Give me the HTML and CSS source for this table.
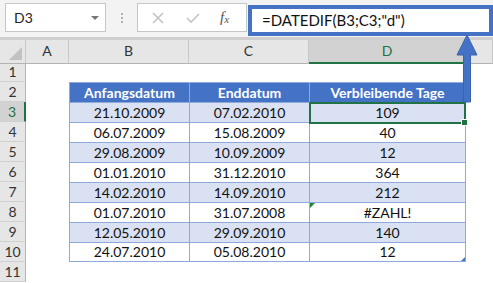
FILE: index.html
```html
<!DOCTYPE html>
<html lang="de">
<head>
  <meta charset="UTF-8" />
  <title>DATEDIF</title>
  <link rel="stylesheet" href="styles.css">
</head>
<body>
  <div class="window">
    <!-- formula bar -->
    <div class="formula-bar">
      <div class="name-box"><span>D3</span><span class="caret"></span></div>
      <div class="grip"><i></i><i></i><i></i></div>
      <div class="fx-buttons">
        <svg class="btn" width="12" height="12" viewBox="0 0 12 12"><path d="M1 1 L11 11 M11 1 L1 11" /></svg>
        <svg class="btn" width="14" height="12" viewBox="0 0 14 12"><path d="M1 6 L5 10 L13 2" /></svg>
        <span class="fx">f<sub>x</sub></span>
      </div>
      <div class="formula">=DATEDIF(B3;C3;"d")</div>
    </div>

    <!-- sheet -->
    <div class="sheet">
      <div class="row heads">
        <div class="corner"><span></span></div>
        <div class="ch">A</div>
        <div class="ch">B</div>
        <div class="ch">C</div>
        <div class="ch sel">D</div>
        <div class="ch"></div>
      </div>
      <div class="row">
        <div class="rh">1</div><div></div><div></div><div></div><div></div><div></div>
      </div>
      <div class="row">
        <div class="rh">2</div><div></div>
        <div class="t th">Anfangsdatum</div><div class="t th">Enddatum</div><div class="t th last">Verbleibende Tage</div><div></div>
      </div>
      <div class="row band">
        <div class="rh sel">3</div><div></div>
        <div class="t">21.10.2009</div><div class="t">07.02.2010</div><div class="t last active">109</div><div></div>
      </div>
      <div class="row">
        <div class="rh">4</div><div></div>
        <div class="t">06.07.2009</div><div class="t">15.08.2009</div><div class="t last">40</div><div></div>
      </div>
      <div class="row band">
        <div class="rh">5</div><div></div>
        <div class="t">29.08.2009</div><div class="t">10.09.2009</div><div class="t last">12</div><div></div>
      </div>
      <div class="row">
        <div class="rh">6</div><div></div>
        <div class="t">01.01.2010</div><div class="t">31.12.2010</div><div class="t last">364</div><div></div>
      </div>
      <div class="row band">
        <div class="rh">7</div><div></div>
        <div class="t">14.02.2010</div><div class="t">14.09.2010</div><div class="t last">212</div><div></div>
      </div>
      <div class="row">
        <div class="rh">8</div><div></div>
        <div class="t">01.07.2010</div><div class="t">31.07.2008</div><div class="t last error">#ZAHL!</div><div></div>
      </div>
      <div class="row band">
        <div class="rh">9</div><div></div>
        <div class="t">12.05.2010</div><div class="t">29.09.2010</div><div class="t last">140</div><div></div>
      </div>
      <div class="row end">
        <div class="rh">10</div><div></div>
        <div class="t">24.07.2010</div><div class="t">05.08.2010</div><div class="t last resize">12</div><div></div>
      </div>
      <div class="row">
        <div class="rh">11</div><div></div><div></div><div></div><div></div><div></div>
      </div>
    </div>

    <!-- arrow pointing at the formula -->
    <svg class="pointer" width="24" height="72" viewBox="0 0 24 72">
      <polygon points="12,2 22,22 15.5,22 15.5,69 8.5,69 8.5,22 2,22" />
    </svg>
  </div>
</body>
</html>
```

FILE: styles.css
```css
:root {
  --blue: #4472c4;
  --band: #d9e1f2;
  --line: #8ea9db;
  --green: #217346;
  --head: #e6e6e6;
  --head-sel: #d2d2d2;
}

body {
  margin: 0;
  background: #fff;
  font-family: Lato, 'Open Sans', sans-serif;
  color: #222;
}

.window {
  position: relative;
  width: 493px;
  height: 283px;
  overflow: hidden;
}

/* ---------- formula bar ---------- */

.formula-bar {
  display: flex;
  align-items: flex-start;
  height: 37px;
  padding-left: 5px;
  background: #f3f3f3;
  border-bottom: 3px solid #cfcfcf;
}

.name-box {
  display: flex;
  align-items: center;
  justify-content: space-between;
  box-sizing: border-box;
  width: 101px;
  height: 29px;
  margin-top: 3px;
  padding: 0 6px 0 8px;
  background: #fff;
  border: 1px solid #c6c6c6;
  font-size: 14px;
}

.caret {
  width: 0;
  height: 0;
  border-left: 4px solid transparent;
  border-right: 4px solid transparent;
  border-top: 4px solid #777;
}

.grip {
  display: flex;
  flex-direction: column;
  align-items: center;
  gap: 2px;
  width: 31px;
  margin-top: 13px;
}

.grip i {
  width: 2px;
  height: 2px;
  background: #b0b0b0;
}

.fx-buttons {
  display: flex;
  align-items: center;
  box-sizing: border-box;
  width: 110px;
  height: 29px;
  margin-top: 3px;
  padding-left: 14px;
  gap: 22px;
  background: #fff;
  border: 1px solid #c6c6c6;
}

.btn path {
  fill: none;
  stroke: #c4c4c4;
  stroke-width: 1.6;
}

.fx {
  font-family: 'Liberation Serif', serif;
  font-style: italic;
  font-size: 15px;
  color: #555;
  margin-left: -2px;
}

.fx sub {
  font-size: 11px;
  vertical-align: -1px;
}

.formula {
  box-sizing: border-box;
  width: 245px;
  height: 31px;
  margin: 5px 0 0 1px;
  padding: 2px 0 0 10px;
  background: #fff;
  border: 4px solid var(--blue);
  font-size: 15px;
  line-height: 19px;
  color: #111;
  white-space: nowrap;
}

/* ---------- grid ---------- */

.row {
  display: grid;
  grid-template-columns: 26px 43px 120px 120px 157px 1fr;
  height: 20px;
  font-size: 14px;
}

.row > div {
  box-sizing: border-box;
  text-align: center;
  line-height: 19px;
}

.row.heads {
  height: 22px;
}

.row.heads > div {
  background: var(--head);
  border-right: 1px solid #c8c8c8;
  border-bottom: 1px solid #b4b4b4;
  line-height: 22px;
  color: #333;
}

.corner {
  position: relative;
}

.corner span {
  position: absolute;
  right: 3px;
  bottom: 3px;
  width: 0;
  height: 0;
  border-left: 13px solid transparent;
  border-bottom: 13px solid #c2c2c2;
}

.row.heads > .ch.sel {
  background: var(--head-sel);
  color: var(--green);
  border-bottom: 2px solid var(--green);
}

.row > .rh {
  background: var(--head);
  border-right: 1px solid #b4b4b4;
  border-bottom: 1px solid #d0d0d0;
  color: #333;
}

.row > .rh.sel {
  background: var(--head-sel);
  color: var(--green);
  border-right: 2px solid var(--green);
}

/* ---------- table ---------- */

.row > .t {
  border-left: 1px solid var(--line);
  border-top: 1px solid var(--line);
  color: #111;
}

.row > .t.last {
  border-right: 1px solid var(--line);
}

.row.band > .t {
  background: var(--band);
}

.row.end > .t {
  border-bottom: 1px solid var(--line);
  line-height: 18px;
}

.row > .th {
  background: var(--blue);
  color: #fff;
  font-weight: bold;
}

.active {
  position: relative;
}

.active::after {
  content: '';
  position: absolute;
  left: -1px;
  top: -1px;
  right: -1px;
  bottom: -2px;
  border: 2px solid var(--green);
}

.active::before {
  content: '';
  position: absolute;
  right: -3px;
  bottom: -4px;
  width: 5px;
  height: 5px;
  background: var(--green);
  border: 1px solid #fff;
  z-index: 1;
}

.error {
  position: relative;
}

.error::before {
  content: '';
  position: absolute;
  left: 0;
  top: 0;
  border-top: 5px solid #1b8a2e;
  border-right: 5px solid transparent;
}

.resize {
  position: relative;
}

.resize::after {
  content: '';
  position: absolute;
  right: 0;
  bottom: 0;
  border-bottom: 4px solid var(--blue);
  border-left: 4px solid transparent;
}

/* ---------- callout arrow ---------- */

.pointer {
  position: absolute;
  left: 455px;
  top: 33px;
}

.pointer polygon {
  fill: var(--blue);
  stroke: #3a62ad;
  stroke-width: 1;
}
```
